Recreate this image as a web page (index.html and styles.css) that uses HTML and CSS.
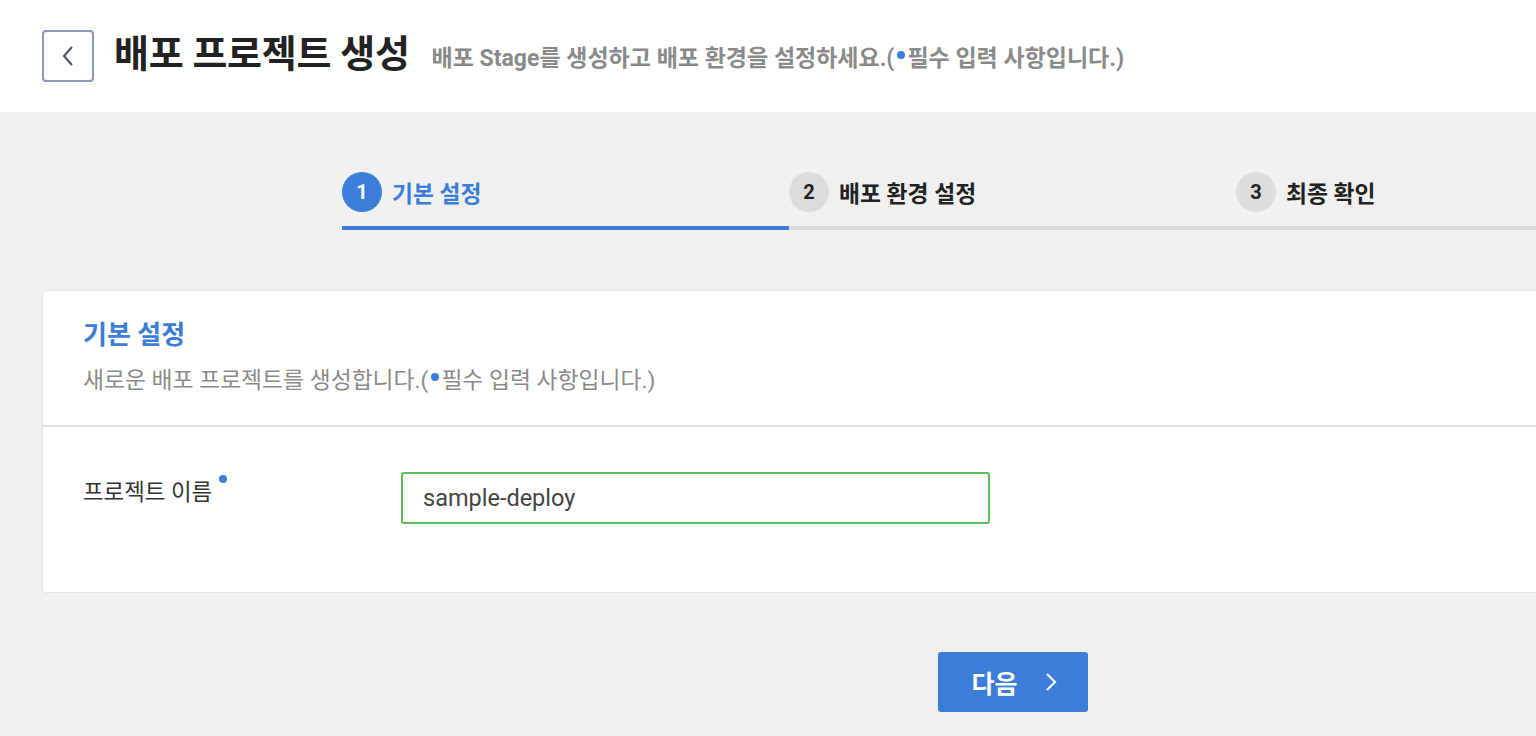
FILE: index.html
```html
<!DOCTYPE html>
<html lang="ko">
<head>
<meta charset="utf-8">
<title>배포 프로젝트 생성</title>
<link rel="stylesheet" href="styles.css">
</head>
<body>
<div class="page">
  <header class="top">
    <button class="back" aria-label="뒤로">
      <svg width="14" height="22" viewBox="0 0 14 22"><path d="M11 2 L3 11 L11 20" fill="none" stroke="#3f4d66" stroke-width="2"/></svg>
    </button>
    <h1 class="title">배포 프로젝트 생성</h1>
    <p class="subtitle">배포 Stage를 생성하고 배포 환경을 설정하세요.(<span class="dot"></span>필수 입력 사항입니다.)</p>
  </header>
  <main class="content">
    <ol class="steps">
      <li class="step active"><span class="num">1</span><span class="label">기본 설정</span></li>
      <li class="step"><span class="num">2</span><span class="label">배포 환경 설정</span></li>
      <li class="step"><span class="num">3</span><span class="label">최종 확인</span></li>
    </ol>
    <section class="card">
      <div class="card-head">
        <h2 class="card-title">기본 설정</h2>
        <p class="card-desc">새로운 배포 프로젝트를 생성합니다.(<span class="dot"></span>필수 입력 사항입니다.)</p>
      </div>
      <div class="card-body">
        <div class="field">
          <label class="field-label">프로젝트 이름<span class="req"></span></label>
          <div class="input">sample-deploy</div>
        </div>
      </div>
    </section>
    <div class="actions">
      <button class="next">다음
        <svg width="14" height="22" viewBox="0 0 14 22"><path d="M3 3 L11 11 L3 19" fill="none" stroke="#fff" stroke-width="2.2"/></svg>
      </button>
    </div>
  </main>
</div>
</body>
</html>
```
FILE: styles.css
```css
html, body {
  margin: 0;
  padding: 0;
  overflow: hidden;
  background: #f0f0f0;
}
body {
  font-family: Roboto, "Noto Sans CJK KR", sans-serif;
  color: #222;
}
.page {
  width: 2025px;
}
.top {
  height: 112px;
  background: #fff;
  display: flex;
  align-items: center;
  padding-left: 42px;
  box-sizing: border-box;
}
.back {
  width: 52px;
  height: 52px;
  box-sizing: border-box;
  border: 2px solid #8c9bb6;
  border-radius: 4px;
  background: #fff;
  display: flex;
  align-items: center;
  justify-content: center;
  padding: 0;
  margin: 0 20px 0 0;
}
.title {
  margin: 0 22px 0 0;
  font-size: 38px;
  font-weight: 700;
  color: #222;
  letter-spacing: -0.3px;
  line-height: 1;
  position: relative;
  top: -2px;
}
.subtitle {
  margin: 0;
  font-size: 23px;
  font-weight: 700;
  color: #8a8a8a;
  letter-spacing: 0;
}
.dot {
  display: inline-block;
  width: 8px;
  height: 8px;
  border-radius: 50%;
  background: #3b7dd8;
  vertical-align: 0.3em;
  margin: 0 2px 0 3px;
}
.req {
  display: inline-block;
  width: 8px;
  height: 8px;
  border-radius: 50%;
  background: #3b7dd8;
  vertical-align: 0.75em;
  margin-left: 7px;
}
.content {
  padding: 60px 42px 40px;
}
.steps {
  list-style: none;
  margin: 0 auto;
  padding: 0;
  width: 1341px;
  display: flex;
}
.step {
  flex: 1;
  display: flex;
  align-items: center;
  gap: 10px;
  padding-bottom: 14px;
  border-bottom: 4px solid #dadada;
}
.step.active {
  border-bottom-color: #3b7dd8;
}
.num {
  width: 40px;
  height: 40px;
  border-radius: 50%;
  background: #dcdcdc;
  color: #222;
  font-size: 20px;
  font-weight: 700;
  display: flex;
  align-items: center;
  justify-content: center;
}
.label {
  font-size: 22.8px;
  font-weight: 700;
  color: #222;
}
.active .num {
  background: #3b7dd8;
  color: #fff;
}
.active .label {
  color: #3b7dd8;
}
.card {
  margin-top: 60px;
  background: #fff;
  border: 1px solid #e3e3e3;
  border-radius: 4px;
}
.card-head {
  padding: 27px 40px 29px;
  border-bottom: 2px solid #e2e2e2;
}
.card-title {
  margin: 0;
  font-size: 26px;
  font-weight: 700;
  color: #3b7dd8;
  line-height: 34px;
}
.card-desc {
  margin: 14px 0 0;
  font-size: 22.8px;
  font-weight: 400;
  color: #8a8a8a;
  line-height: 30px;
}
.card-body {
  padding: 45px 40px 68px;
}
.field {
  display: flex;
  align-items: flex-start;
}
.field-label {
  width: 318px;
  font-size: 22.4px;
  color: #333;
  line-height: 30px;
  padding-top: 3px;
}
.input {
  width: 589px;
  height: 52px;
  box-sizing: border-box;
  border: 2px solid #5cbf55;
  border-radius: 3px;
  padding: 0 20px;
  font-size: 23.5px;
  color: #444;
  display: flex;
  align-items: center;
}
.actions {
  display: flex;
  justify-content: center;
  margin-top: 59px;
}
.next {
  width: 150px;
  height: 60px;
  border: 0;
  border-radius: 3px;
  background: #3b7dd8;
  color: #fff;
  font-family: inherit;
  font-size: 25px;
  font-weight: 700;
  display: flex;
  align-items: center;
  justify-content: center;
  gap: 26px;
  padding: 0 0 0 4px;
}
```
